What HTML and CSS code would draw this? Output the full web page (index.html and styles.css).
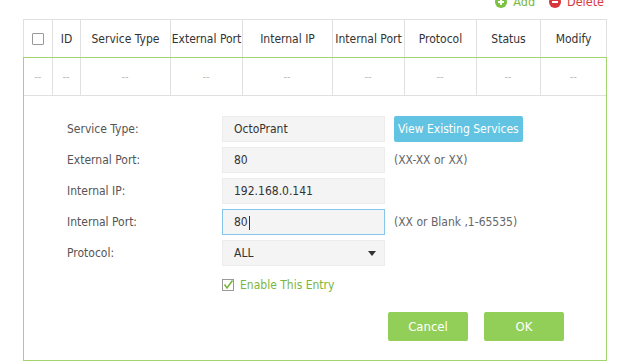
FILE: index.html
```html
<!DOCTYPE html>
<html>
<head>
<meta charset="utf-8" />
<title>Virtual Servers</title>
<link rel="stylesheet" href="styles.css">
</head>
<body>
	<div class="toolbar">
		<span class="tool add"><i class="ico"></i>Add</span>
		<span class="tool del"><i class="ico"></i>Delete</span>
	</div>

	<div class="grid">
		<table class="head">
			<colgroup>
				<col style="width:29px"><col style="width:28px"><col style="width:90px"><col style="width:72px"><col style="width:90px"><col style="width:72px"><col style="width:72px"><col style="width:64px"><col style="width:66px">
			</colgroup>
			<tr>
				<th><span class="chk"></span></th>
				<th>ID</th>
				<th>Service Type</th>
				<th>External Port</th>
				<th>Internal IP</th>
				<th>Internal Port</th>
				<th>Protocol</th>
				<th>Status</th>
				<th>Modify</th>
			</tr>
		</table>

		<div class="panel">
			<table class="rows">
				<colgroup>
					<col style="width:28px"><col style="width:28px"><col style="width:90px"><col style="width:72px"><col style="width:90px"><col style="width:72px"><col style="width:72px"><col style="width:64px"><col style="width:66px">
				</colgroup>
				<tr>
					<td>--</td><td>--</td><td>--</td><td>--</td><td>--</td><td>--</td><td>--</td><td>--</td><td>--</td>
				</tr>
			</table>

			<div class="form">
				<label>Service Type:</label>
				<div class="field">OctoPrant</div>
				<div><span class="btn-view">View Existing Services</span></div>

				<label>External Port:</label>
				<div class="field">80</div>
				<div class="hint">(XX-XX or XX)</div>

				<label>Internal IP:</label>
				<div class="field">192.168.0.141</div>
				<div></div>

				<label>Internal Port:</label>
				<div class="field focus">80<span class="caret"></span></div>
				<div class="hint">(XX or Blank ,1-65535)</div>

				<label>Protocol:</label>
				<div class="field select">ALL<span class="arrow"></span></div>
				<div></div>

				<div></div>
				<div class="enable"><span class="tick">
					<svg width="12" height="12" viewBox="0 0 12 12"><rect x="0.5" y="0.5" width="11" height="11" fill="#fff" stroke="#999"/><path d="M2.5 5.5 L5 9 L10.5 1.5" fill="none" stroke="#7ab63d" stroke-width="1.6"/></svg>
				</span>Enable This Entry</div>
				<div></div>
			</div>

			<div class="actions">
				<span class="btn">Cancel</span>
				<span class="btn">OK</span>
			</div>
		</div>
	</div>
</body>
</html>
```

FILE: styles.css
```css
body, div, table, th, td {padding:0; margin:0;}
body {background:#fff; font-family:"DejaVu Sans Condensed", "DejaVu Sans", sans-serif; font-size:12px; color:#555;}

.toolbar {display:flex; justify-content:flex-end; gap:14px; height:25px; margin-top:-6px; padding-right:20px; line-height:16px; font-size:12.5px;}
.tool {display:flex; align-items:center; height:16px;}
.tool .ico {display:block; width:12px; height:12px; border-radius:50%; margin-right:6px; position:relative;}
.add {color:#7ab63d;}
.add .ico {background:#7cc242;}
.add .ico:before, .add .ico:after, .del .ico:before {content:''; position:absolute; background:#fff;}
.add .ico:before {left:3px; top:5px; width:6px; height:2px;}
.add .ico:after {left:5px; top:3px; width:2px; height:6px;}
.del {color:#d9363e;}
.del .ico {background:#d9363e;}
.del .ico:before {left:3px; top:5px; width:6px; height:2px;}

.grid {width:584px; margin-left:23px;}
table {border-collapse:collapse; table-layout:fixed; width:584px;}
.head th {height:37px; border:1px solid #e0e0e0; border-bottom:none; font-weight:normal; color:#333; font-size:12px; text-align:center; white-space:nowrap; padding:0;}
.chk {display:inline-block; width:10px; height:10px; border:1px solid #999; border-radius:1px; vertical-align:middle; background:#fff;}

.panel {border:1px solid #a3d46e; padding-bottom:19px;}
.rows {width:582px;}
.rows td {height:37px; border-left:1px solid #e0e0e0; border-bottom:1px solid #e0e0e0; text-align:center; color:#bbb; font-size:11px;}
.rows td:first-child {border-left:none;}

.form {display:grid; grid-template-columns:146px 163px auto; row-gap:5px; column-gap:9px; padding:20px 0 0 43px; align-items:center;}
.form label {color:#555;}
.field {height:24px; line-height:24px; border:1px solid #ececec; background:#f4f4f4; padding-left:11px; color:#333; position:relative;}
.field.focus {border-color:#85c7ea;}
.caret {display:inline-block; width:1px; height:14px; background:#333; vertical-align:middle; margin-left:1px;}
.arrow {position:absolute; right:8px; top:10px; border-left:4.5px solid transparent; border-right:4.5px solid transparent; border-top:5px solid #333;}
.hint {color:#666;}
.btn-view {display:inline-block; height:26px; line-height:26px; padding:0 4px; background:#62c4e2; color:#fff; border-radius:2px; font-size:12px;}

.enable {display:flex; align-items:center; color:#7ab63d; margin-top:7px; font-size:12px;}
.tick {display:block; width:12px; height:12px; margin-right:6px;}
.tick svg {display:block;}

.actions {display:flex; justify-content:flex-end; gap:16px; padding-right:42px; margin-top:20px;}
.btn {display:block; width:80px; height:29px; line-height:29px; text-align:center; background:#92cf59; color:#fff; border-radius:2px; font-size:13px;}
```
